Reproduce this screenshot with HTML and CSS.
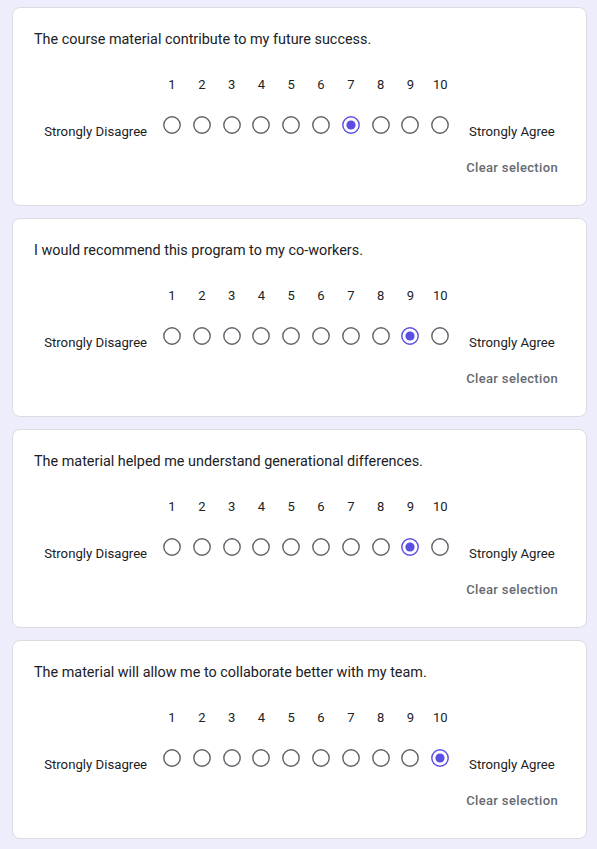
FILE: index.html
```html
<!DOCTYPE html>
<html lang="en">
<head>
<meta charset="utf-8">
<title>Survey</title>
<link rel="stylesheet" href="styles.css">
</head>
<body>
<main class="form">
  <section class="card" data-selected="7">
    <div class="title">The course material contribute to my future success.</div>
    <div class="scale">
      <div class="label label-left">Strongly Disagree</div>
      <div class="options"></div>
      <div class="label label-right">Strongly Agree</div>
    </div>
    <div class="clear-row"><span class="clear">Clear selection</span></div>
  </section>
  <section class="card" data-selected="9">
    <div class="title">I would recommend this program to my co-workers.</div>
    <div class="scale">
      <div class="label label-left">Strongly Disagree</div>
      <div class="options"></div>
      <div class="label label-right">Strongly Agree</div>
    </div>
    <div class="clear-row"><span class="clear">Clear selection</span></div>
  </section>
  <section class="card" data-selected="9">
    <div class="title">The material helped me understand generational differences.</div>
    <div class="scale">
      <div class="label label-left">Strongly Disagree</div>
      <div class="options"></div>
      <div class="label label-right">Strongly Agree</div>
    </div>
    <div class="clear-row"><span class="clear">Clear selection</span></div>
  </section>
  <section class="card" data-selected="10">
    <div class="title">The material will allow me to collaborate better with my team.</div>
    <div class="scale">
      <div class="label label-left">Strongly Disagree</div>
      <div class="options"></div>
      <div class="label label-right">Strongly Agree</div>
    </div>
    <div class="clear-row"><span class="clear">Clear selection</span></div>
  </section>
</main>
<script src="script.js"></script>
</body>
</html>
```

FILE: styles.css
```css
html, body {
  margin: 0;
  padding: 0;
}
body {
  background: #eeedfb;
  font-family: Roboto, "Liberation Sans", Arial, sans-serif;
  color: #202124;
}
.form {
  display: flex;
  flex-direction: column;
  gap: 12px;
  padding: 7px 10px 10px 12px;
}
.card {
  background: #fff;
  border: 1px solid #dadce0;
  border-radius: 8px;
  padding: 22px 21px 27px 21px;
}
.title {
  font-size: 14.4px;
  line-height: 20px;
  color: #202124;
}
.scale {
  display: flex;
  justify-content: center;
  align-items: flex-end;
  margin-top: 25px;
}
.label {
  font-size: 13.2px;
  line-height: 20px;
  color: #202124;
}
.label-left {
  margin-right: 10px;
}
.label-right {
  margin-left: 14px;
}
.options {
  display: flex;
  padding-bottom: 8px;
}
.option {
  width: 29.8px;
  display: flex;
  flex-direction: column;
  align-items: center;
}
.num {
  font-size: 13px;
  line-height: 20px;
  color: #202124;
}
.radio {
  display: block;
  width: 18px;
  height: 18px;
  margin-top: 21px;
}
.ring {
  fill: none;
  stroke: #5f6368;
  stroke-width: 1.4;
}
.radio.on .ring {
  stroke: #5b4ee3;
}
.dot {
  fill: #5b4ee3;
}
.clear-row {
  display: flex;
  justify-content: flex-end;
  margin-top: 16px;
  padding-right: 7px;
}
.clear {
  font-size: 13px;
  line-height: 20px;
  font-weight: 500;
  letter-spacing: 0.35px;
  color: #666a70;
}
```

FILE: script.js
```js
document.querySelectorAll('.card').forEach(function (card) {
  var sel = parseInt(card.getAttribute('data-selected'), 10);
  var box = card.querySelector('.options');
  var ns = 'http://www.w3.org/2000/svg';
  for (var i = 1; i <= 10; i++) {
    var opt = document.createElement('div');
    opt.className = 'option';
    var num = document.createElement('div');
    num.className = 'num';
    num.textContent = String(i);
    opt.appendChild(num);
    var svg = document.createElementNS(ns, 'svg');
    svg.setAttribute('viewBox', '0 0 18 18');
    svg.setAttribute('class', 'radio' + (i === sel ? ' on' : ''));
    var ring = document.createElementNS(ns, 'circle');
    ring.setAttribute('cx', '9');
    ring.setAttribute('cy', '9');
    ring.setAttribute('r', '8.2');
    ring.setAttribute('class', 'ring');
    svg.appendChild(ring);
    if (i === sel) {
      var dot = document.createElementNS(ns, 'circle');
      dot.setAttribute('cx', '9');
      dot.setAttribute('cy', '9');
      dot.setAttribute('r', '4.6');
      dot.setAttribute('class', 'dot');
      svg.appendChild(dot);
    }
    opt.appendChild(svg);
    box.appendChild(opt);
  }
});
```
